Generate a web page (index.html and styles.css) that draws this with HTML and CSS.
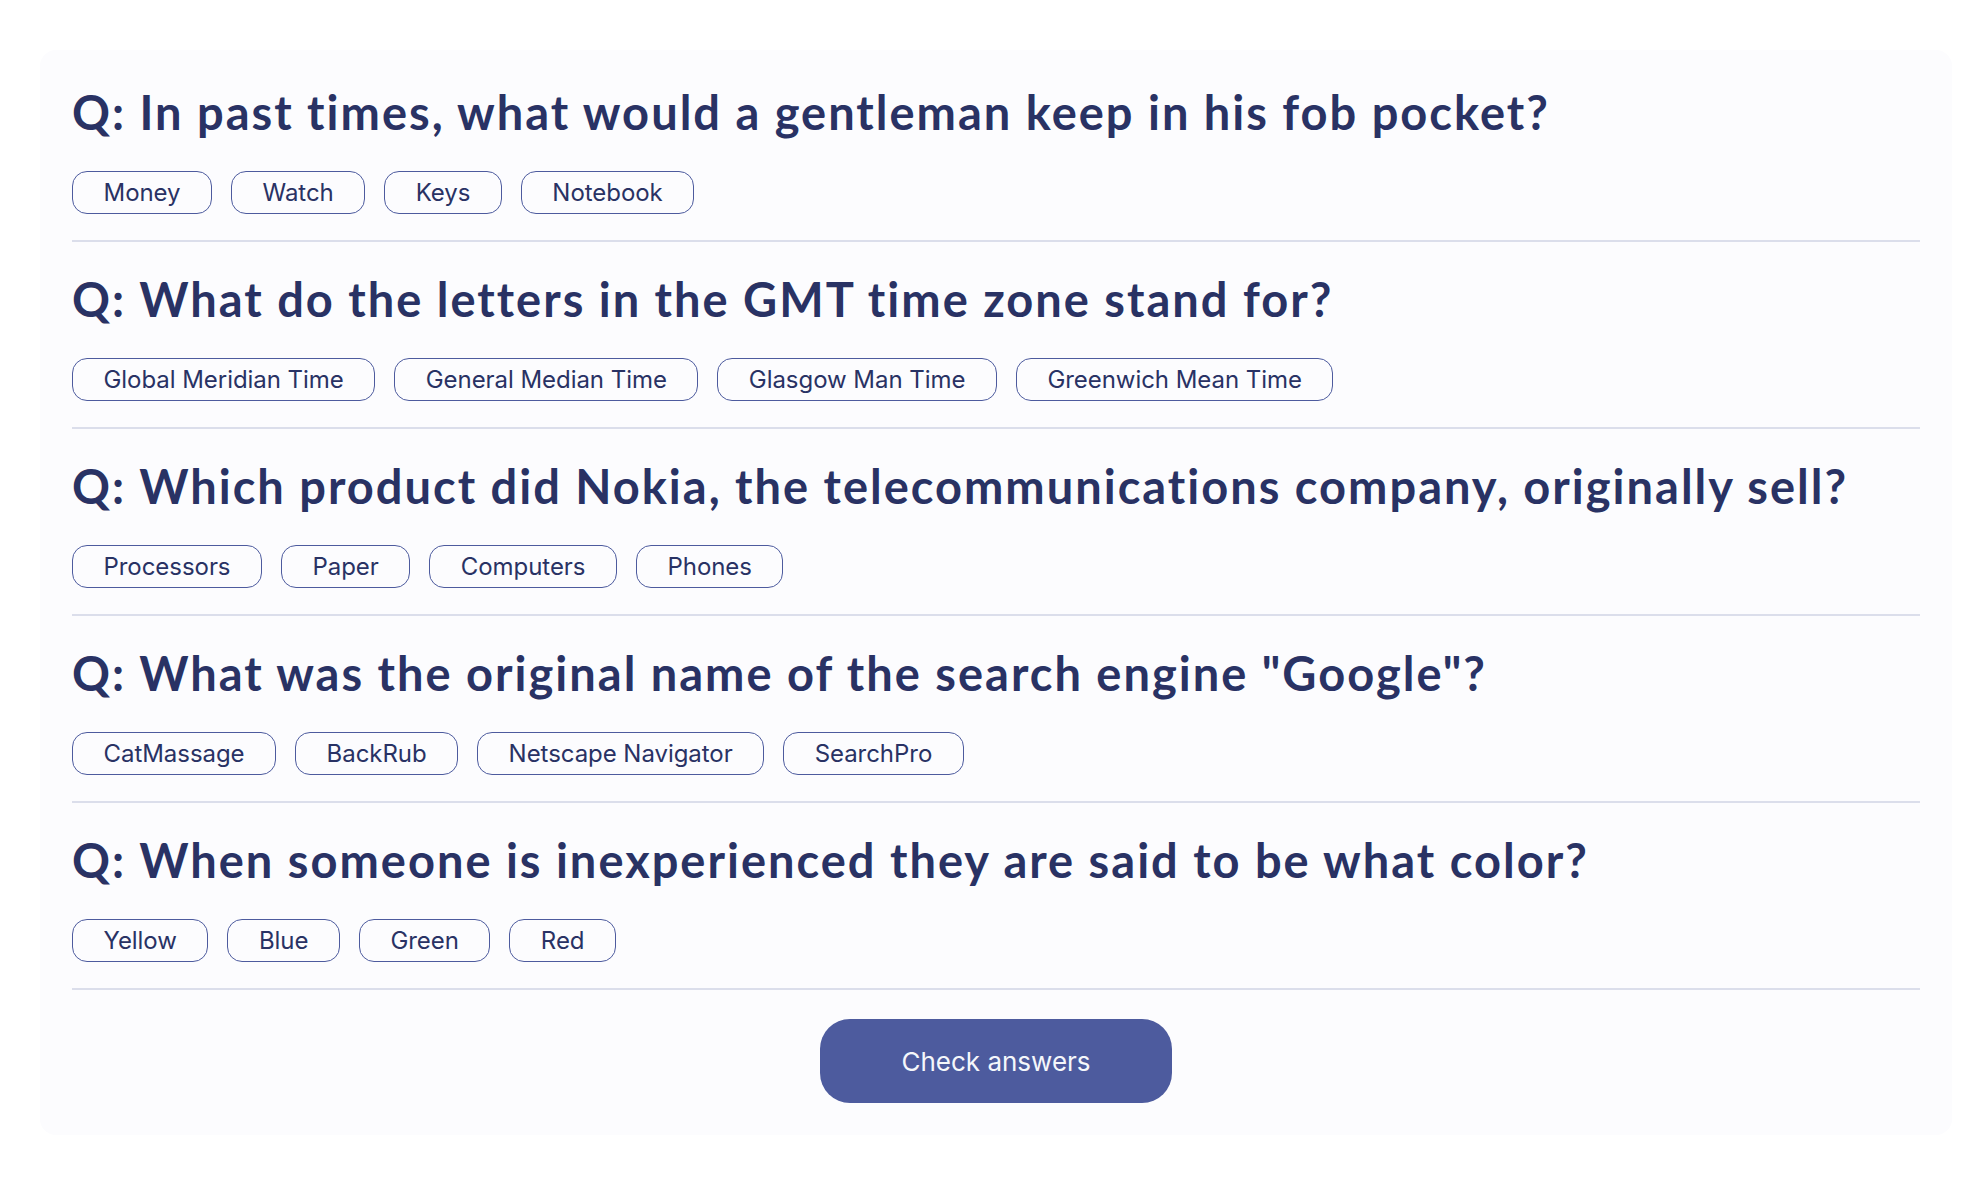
FILE: index.html
```html
<!DOCTYPE html>
<html lang="en">
<head>
<meta charset="utf-8">
<title>Quizzical</title>
<link rel="stylesheet" href="styles.css">
</head>
<body>
<main class="card">
  <section class="question">
    <h2 class="question-title">Q: In past times, what would a gentleman keep in his fob pocket?</h2>
    <div class="answers">
      <button class="answer">Money</button>
      <button class="answer">Watch</button>
      <button class="answer">Keys</button>
      <button class="answer">Notebook</button>
    </div>
  </section>
  <section class="question">
    <h2 class="question-title">Q: What do the letters in the GMT time zone stand for?</h2>
    <div class="answers">
      <button class="answer">Global Meridian Time</button>
      <button class="answer">General Median Time</button>
      <button class="answer">Glasgow Man Time</button>
      <button class="answer">Greenwich Mean Time</button>
    </div>
  </section>
  <section class="question">
    <h2 class="question-title">Q: Which product did Nokia, the telecommunications company, originally sell?</h2>
    <div class="answers">
      <button class="answer">Processors</button>
      <button class="answer">Paper</button>
      <button class="answer">Computers</button>
      <button class="answer">Phones</button>
    </div>
  </section>
  <section class="question">
    <h2 class="question-title">Q: What was the original name of the search engine "Google"?</h2>
    <div class="answers">
      <button class="answer">CatMassage</button>
      <button class="answer">BackRub</button>
      <button class="answer">Netscape Navigator</button>
      <button class="answer">SearchPro</button>
    </div>
  </section>
  <section class="question">
    <h2 class="question-title">Q: When someone is inexperienced they are said to be what color?</h2>
    <div class="answers">
      <button class="answer">Yellow</button>
      <button class="answer">Blue</button>
      <button class="answer">Green</button>
      <button class="answer">Red</button>
    </div>
  </section>
  <div class="actions">
    <button class="check-btn">Check answers</button>
  </div>
</main>
</body>
</html>
```
FILE: styles.css
```css
* { box-sizing: border-box; }

html, body {
  margin: 0;
  padding: 0;
  background: #ffffff;
}

body {
  padding: 50px 36px 0 40px;
  font-family: "Inter", "Liberation Sans", sans-serif;
  color: #293264;
}

.card {
  background: #fcfcfe;
  border-radius: 16px;
  padding: 5px 32px 32px 32px;
}

.question {
  padding: 30px 0 26px 0;
  border-bottom: 2px solid #dbdeeb;
}

.question-title {
  margin: 0;
  font-family: "Lato", "Liberation Sans", sans-serif;
  font-weight: 700;
  font-size: 47px;
  line-height: 54px;
  letter-spacing: 2px;
  color: #293264;
  white-space: nowrap;
}

.answers {
  display: flex;
  gap: 19px;
  margin-top: 32px;
}

.answer {
  font-family: "Inter", "Liberation Sans", sans-serif;
  font-size: 24px;
  line-height: 29px;
  letter-spacing: -0.05px;
  color: #293264;
  background: transparent;
  border: 1.5px solid #4d5b9e;
  border-radius: 15px;
  padding: 5.5px 30.5px;
  height: 43px;
  cursor: pointer;
}

.actions {
  display: flex;
  justify-content: center;
  margin-top: 29px;
}

.check-btn {
  width: 352px;
  height: 84px;
  border: none;
  border-radius: 30px;
  background: #4d5b9e;
  color: #f5f7fb;
  font-family: "Inter", "Liberation Sans", sans-serif;
  font-size: 26px;
  font-weight: 400;
  cursor: pointer;
}
```
